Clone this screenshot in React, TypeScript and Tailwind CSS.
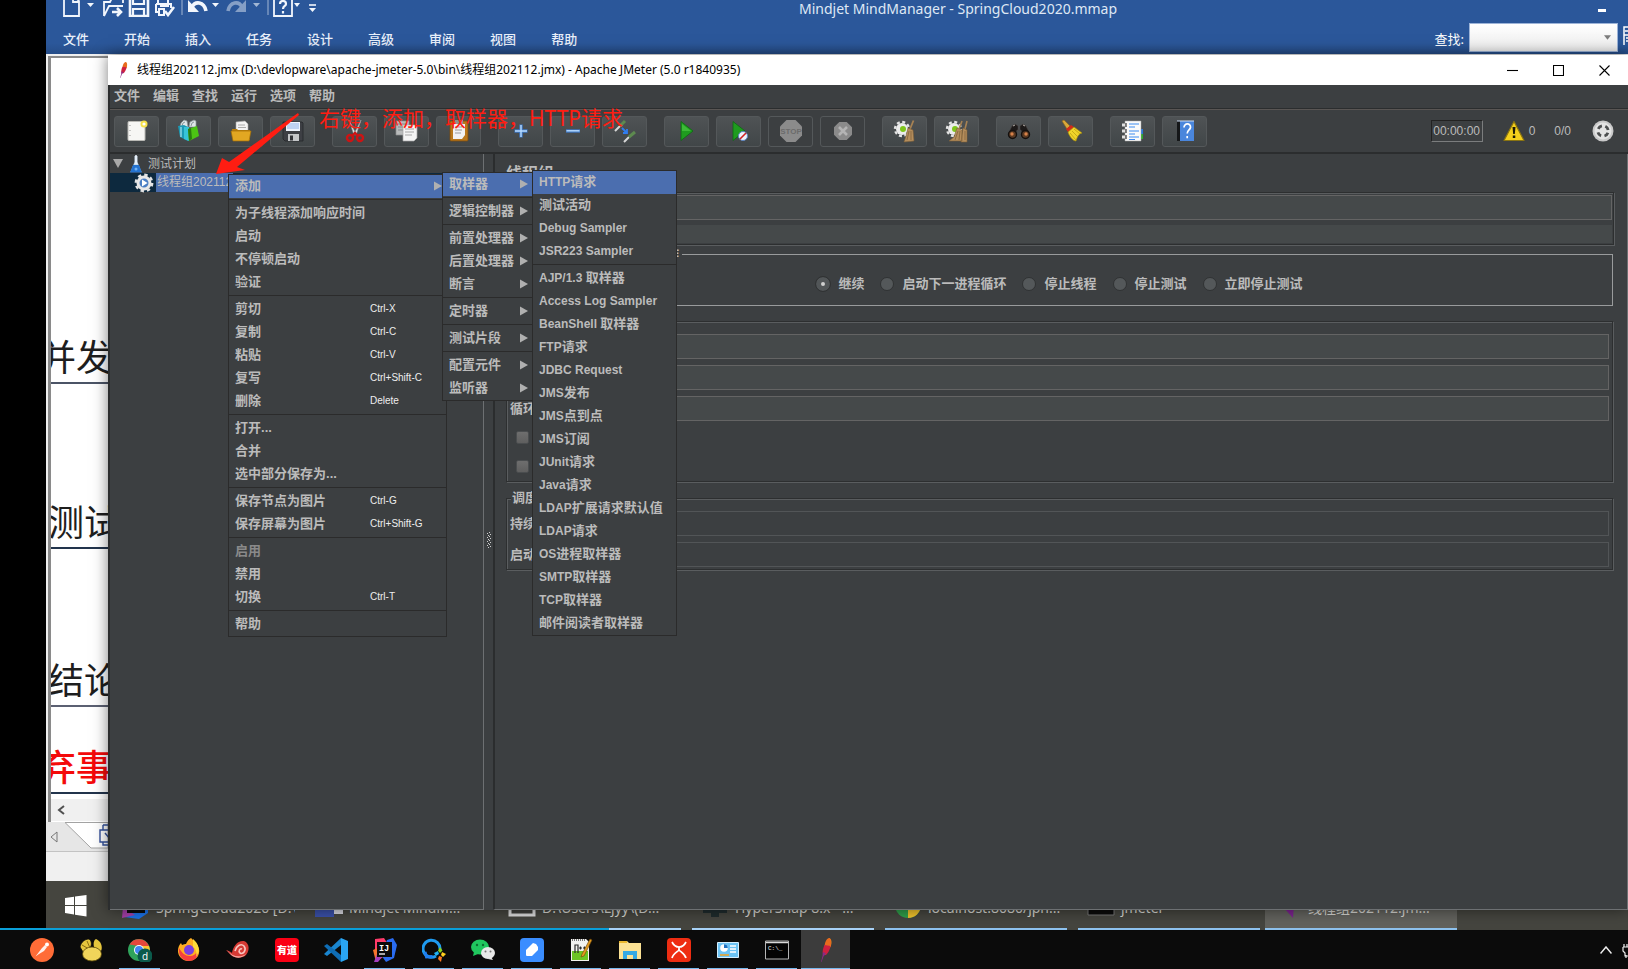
import React from "react";

type Entry = { label: string; key?: string; disabled?: boolean; active?: boolean; sub?: boolean };

const UI = "font-['Liberation_Sans','Noto_Sans_CJK_SC',sans-serif]";
const SEGOE = "font-['Noto_Sans','Noto_Sans_CJK_SC',sans-serif]";

/* ---------- toolbar icons ---------- */

const Icon = ({ children }: { children: React.ReactNode }) => (
  <svg viewBox="0 0 24 24" className="size-6 shrink-0" aria-hidden="true">
    {children}
  </svg>
);

const NewIcon = () => (
  <Icon>
    <rect x="3" y="2.500" width="17" height="19" rx="1" fill="#f6f6f4" stroke="#b9b9b5" />
    <path d="M5 6v1M5 11v1M5 16v1" stroke="#999" />
    <circle cx="19" cy="5" r="3.500" fill="#f5e04a" />
    <circle cx="19" cy="5" r="1.600" fill="#fff" />
  </Icon>
);
const TemplateIcon = () => (
  <Icon>
    <path d="M3 8 4 4l3-3 3 1 1 6zM12 8l1-5 4-2 2 1v6z" fill="#dfe6e8" stroke="#8b9799" strokeWidth=".7" />
    <path d="M5 7l1-3 2-1M14 7l1-3 2-1" fill="none" stroke="#8b9799" />
    <path d="M1 7l6-1 4 2v14l-8-4z" fill="#1c9ab5" />
    <path d="M7 8h5v14l-5-2z" fill="#36c4d8" />
    <path d="M11 10l9-3 2 10-10 5z" fill="#4cc414" />
    <path d="M11 10l1 12 3-2-1-11z" fill="#2a7d10" />
    <path d="M4 8v10" stroke="#c9f2fa" />
  </Icon>
);
const OpenIcon = () => (
  <Icon>
    <path d="M7 3l9-1 3 3v9H7z" fill="#f4f4f4" stroke="#aaa" strokeWidth=".6" />
    <path d="M9 6h7M9 8.500h8" stroke="#999" strokeWidth=".8" />
    <path d="M3 10h5l1 1h12v10H4z" fill="#b97f0c" />
    <path d="M2 12h20l-2 10H4z" fill="#e2a722" stroke="#a46f06" strokeWidth=".7" />
  </Icon>
);
const SaveIcon = () => (
  <Icon>
    <path d="M2 3h19l1 1v18H4l-2-2z" fill="#3d3f44" stroke="#24262a" strokeWidth=".8" />
    <path d="M5 3h14v9H5z" fill="#eef3fb" />
    <path d="M6 5h12M6 7h12M6 9h12" stroke="#8fb1e6" />
    <path d="M7 15h11v7H7z" fill="#c4c6c8" />
    <path d="M9 16.500h3v5H9z" fill="#303236" />
  </Icon>
);
const CutIcon = () => (
  <Icon>
    <path d="M6 1l7 14-2 1zM18 1l-7 14 2 1z" fill="#e8e8e8" stroke="#9a9a9a" strokeWidth=".6" />
    <circle cx="7" cy="19" r="3" fill="none" stroke="#cc1414" strokeWidth="2.400" />
    <circle cx="17" cy="19" r="3" fill="none" stroke="#cc1414" strokeWidth="2.400" />
    <path d="M9 17l3-3 3 3" fill="none" stroke="#cc1414" strokeWidth="2.400" />
  </Icon>
);
const CopyIcon = () => (
  <Icon>
    <path d="M1 2h13v14H1z" fill="#b9bbbb" stroke="#8c8f90" strokeWidth=".7" />
    <path d="M3 5h8M3 8h8M3 11h5" stroke="#85888a" />
    <path d="M8 6h14v13l-3 3H8z" fill="#f4f4f4" stroke="#a8a8a8" strokeWidth=".7" />
    <path d="M10 10h9M10 13h9M10 16h7" stroke="#a6a6a6" />
  </Icon>
);
const PasteIcon = () => (
  <Icon>
    <rect x="3" y="2" width="18" height="20" rx="1" fill="#b9781c" stroke="#7d4d0c" strokeWidth=".8" />
    <path d="M8 1h8v4H8z" fill="#8d9092" />
    <path d="M6 5h12v11l-3 4H6z" fill="#f2f2f2" />
    <path d="M8 8h7M8 11h7M8 14h6" stroke="#9a9a9a" />
  </Icon>
);
const PlusIcon = () => (
  <Icon>
    <path d="M12 5.500v13M5.500 12h13" stroke="#3f78c4" strokeWidth="3.400" />
    <path d="M12 6v12M6 12h12" stroke="#b9dcff" strokeWidth="1.400" />
  </Icon>
);
const MinusIcon = () => (
  <Icon>
    <path d="M5 12h14" stroke="#3f78c4" strokeWidth="3.400" />
    <path d="M5.500 11.800h13" stroke="#b9dcff" strokeWidth="1.400" />
  </Icon>
);
const ToggleIcon = () => (
  <Icon>
    <path d="M2 12l6-6" stroke="#d8d8d8" strokeWidth="2" />
    <path d="M7 7l5-5" stroke="#5d8a4f" strokeWidth="3" />
    <path d="M11 23l5-5" stroke="#d8d8d8" strokeWidth="2" />
    <path d="M16 18l6-5" stroke="#5d8a4f" strokeWidth="3" />
    <path d="M9 9l5 5m0-4v4h-4" fill="none" stroke="#2f7df0" strokeWidth="1.800" />
  </Icon>
);
const PlayShape = () => <path d="M6 2.500 18 12 6 21.500z" fill="#1f9c1f" stroke="#0d6a12" strokeWidth=".8" />;
const StartIcon = () => (
  <Icon>
    <PlayShape />
    <path d="M7 5v7h9z" fill="#52cf4a" opacity=".6" />
  </Icon>
);
const StartNoPauseIcon = () => (
  <Icon>
    <PlayShape />
    <circle cx="16" cy="17" r="4.500" fill="#eef2fb" stroke="#5b84c4" />
    <path d="M13 20l6-6" stroke="#cf2222" strokeWidth="1.600" />
  </Icon>
);
const StopIcon = () => (
  <Icon>
    <path d="M7.500 1h9L23 7.500v9L16.500 23h-9L1 16.500v-9z" fill="#8b8b8b" />
    <text x="12" y="15" textAnchor="middle" fontSize="8" fontWeight="bold" fontFamily="Liberation Sans" fill="#6c6c6c">
      STOP
    </text>
  </Icon>
);
const ShutdownIcon = () => (
  <Icon>
    <path d="M8.300 3h7.400L21 8.300v7.400L15.700 21H8.300L3 15.700V8.300z" fill="#8b8b8b" />
    <path d="M8 8l8 8M16 8l-8 8" stroke="#b4b4b4" strokeWidth="2.600" />
  </Icon>
);
const Cog = () => (
  <>
    <circle cx="9" cy="10" r="6" fill="#ececec" />
    <circle cx="9" cy="10" r="7" fill="none" stroke="#e4e4e4" strokeWidth="2.400" strokeDasharray="3 2.500" />
    <circle cx="10" cy="10" r="3" fill="#7fc51c" />
  </>
);
const ClearIcon = () => (
  <Icon>
    <Cog />
    <path d="M20.500 1.500 17 10" stroke="#a78253" strokeWidth="1.800" />
    <path d="M15 9l5 2 1 11-10 1 2-6z" fill="#b48d5c" stroke="#7d5f38" strokeWidth=".6" />
    <path d="M16 12l-2 9M18 12v9" stroke="#7d5f38" strokeWidth=".7" />
  </Icon>
);
const ClearAllIcon = () => (
  <Icon>
    <Cog />
    <path d="M17 2l-3 8M22 2l-2 8" stroke="#a78253" strokeWidth="1.600" />
    <path d="M12 9l5 2v11H4l5-4zM18 9l4 2v12h-6z" fill="#b48d5c" stroke="#7d5f38" strokeWidth=".6" />
    <path d="M13 12l-3 9M15 12l-1 9M20 12v9" stroke="#7d5f38" strokeWidth=".7" />
  </Icon>
);
const SearchIcon = () => (
  <Icon>
    <path d="M5 7l3-2 3 2v4h2V7l3-2 3 2 4 8h-8l-1-4h-4l-1 4H1z" fill="#1d1a19" stroke="#4c4744" strokeWidth=".5" />
    <circle cx="5.500" cy="15.500" r="4" fill="#5b3a22" stroke="#141110" strokeWidth="1.400" />
    <circle cx="18.500" cy="15.500" r="4" fill="#5b3a22" stroke="#141110" strokeWidth="1.400" />
    <circle cx="5" cy="15" r="1.700" fill="#d8824a" />
    <circle cx="19" cy="15" r="1.700" fill="#d8824a" />
    <path d="M6 7l2-1M16 6l2 1" stroke="#b7b0aa" />
  </Icon>
);
const BroomIcon = () => (
  <Icon>
    <path d="M3 2l2-1 6 6-3 3z" fill="#d9a83a" stroke="#8e6a16" strokeWidth=".6" />
    <path d="M7 10l5-4 3 2-6 5z" fill="#d22a1a" />
    <path d="M9 13l6-5 8 6c-4 1-5 5-6 8-3 0-7-5-8-9z" fill="#f0d52a" stroke="#a88d0c" strokeWidth=".7" />
    <path d="M11 14l6 7M13 12l6 6M15 10l6 5" stroke="#b7990f" strokeWidth=".7" />
  </Icon>
);
const ListIcon = () => (
  <Icon>
    <path d="M20 10h2v5h-2z" fill="#2a76d8" />
    <path d="M20 15h2v5h-2z" fill="#2ea72c" />
    <path d="M4 2h16v20H4z" fill="#fafafa" stroke="#aaa" strokeWidth=".5" />
    <path d="M8 5h10M8 12h10M8 18h10" stroke="#3d8bf0" strokeWidth="1.200" />
    <path d="M8 8h6M8 15h6M8 20.500h6" stroke="#3d8bf0" strokeWidth="1.200" />
    <path d="M1 6h4M1 12h4M1 18h4" stroke="#e0e0e0" strokeWidth="3" />
    <path d="M5 4v4M5 10v4M5 16v4" stroke="#333" strokeWidth="1.200" />
  </Icon>
);
const HelpIcon = () => (
  <Icon>
    <path d="M4 2h4v20H4z" fill="#151719" />
    <path d="M7 2h14v20H7z" fill="#4a86dc" />
    <path d="M4 2h17" stroke="#ccdcf4" />
    <path d="M11 8.500c0-5 7-4.500 6.500 0-.4 2.500-3.300 2.500-3.300 6M14.200 17v2.200" fill="none" stroke="#fff" strokeWidth="1.700" />
  </Icon>
);

const TOOL_GROUPS: { name: string; icon: React.ReactNode; off?: boolean }[][] = [
  [
    { name: "新建", icon: <NewIcon /> },
    { name: "模板", icon: <TemplateIcon /> },
    { name: "打开", icon: <OpenIcon /> },
    { name: "保存", icon: <SaveIcon /> },
  ],
  [
    { name: "剪切", icon: <CutIcon /> },
    { name: "复制", icon: <CopyIcon /> },
    { name: "粘贴", icon: <PasteIcon /> },
  ],
  [
    { name: "展开", icon: <PlusIcon /> },
    { name: "折叠", icon: <MinusIcon /> },
    { name: "切换", icon: <ToggleIcon /> },
  ],
  [
    { name: "启动", icon: <StartIcon /> },
    { name: "不停顿启动", icon: <StartNoPauseIcon /> },
    { name: "停止", icon: <StopIcon />, off: true },
    { name: "关闭", icon: <ShutdownIcon />, off: true },
  ],
  [
    { name: "清除", icon: <ClearIcon /> },
    { name: "清除全部", icon: <ClearAllIcon /> },
  ],
  [
    { name: "查找", icon: <SearchIcon /> },
    { name: "重置查找", icon: <BroomIcon /> },
  ],
  [
    { name: "函数助手", icon: <ListIcon /> },
    { name: "帮助", icon: <HelpIcon /> },
  ],
];

/* ---------- popup menus ---------- */

/* Latin runs are set one pixel smaller than the Chinese glyphs beside them. */
const Mixed = ({ text }: { text: string }) => (
  <>
    {text.split(/([\x20-\x7e]+)/).map((run, i) =>
      /^[\x20-\x7e]+$/.test(run) && run !== "..." ? (
        <span key={i} className="whitespace-pre text-[12px]">{run}</span>
      ) : (
        run
      )
    )}
  </>
);

const Popup = ({ groups, place }: { groups: Entry[][]; place: string }) => (
  <div role="menu" className={`absolute border border-[#2b2b2b] bg-[#3c3f41] ${place}`}>
    {groups.map((group, g) => (
      <div key={g} role="group" className={g ? "mt-px border-t border-[#2b2b2b] pt-[2px]" : ""}>
        {group.map((item) => (
          <button
            key={item.label}
            type="button"
            role="menuitem"
            disabled={item.disabled}
            className={`flex h-[23px] w-full items-center pr-1 pb-[2px] pl-[6px] text-left text-[13px] leading-[18px] font-bold whitespace-nowrap ${
              item.active ? "bg-[#4b6eaf]" : ""
            } ${item.disabled ? "text-[#8a8a8a]" : "text-[#bbbbbb]"}`}
          >
            <span className="flex-1">
              <Mixed text={item.label} />
            </span>
            {item.key && <kbd className={`w-[72px] text-[10px] font-normal text-[#eeeeee] ${UI}`}>{item.key}</kbd>}
            {item.sub && (
              <svg viewBox="0 0 8 10" className="h-[10px] w-2" aria-hidden="true">
                <path d="M0 0.500 8 5 0 9.500z" fill="#b0b0b0" />
              </svg>
            )}
          </button>
        ))}
      </div>
    ))}
  </div>
);

const NODE_MENU: Entry[][] = [
  [{ label: "添加", sub: true, active: true }],
  [{ label: "为子线程添加响应时间" }, { label: "启动" }, { label: "不停顿启动" }, { label: "验证" }],
  [
    { label: "剪切", key: "Ctrl-X" },
    { label: "复制", key: "Ctrl-C" },
    { label: "粘贴", key: "Ctrl-V" },
    { label: "复写", key: "Ctrl+Shift-C" },
    { label: "删除", key: "Delete" },
  ],
  [{ label: "打开..." }, { label: "合并" }, { label: "选中部分保存为..." }],
  [
    { label: "保存节点为图片", key: "Ctrl-G" },
    { label: "保存屏幕为图片", key: "Ctrl+Shift-G" },
  ],
  [{ label: "启用", disabled: true }, { label: "禁用" }, { label: "切换", key: "Ctrl-T" }],
  [{ label: "帮助" }],
];

const ADD_MENU: Entry[][] = [
  [{ label: "取样器", sub: true, active: true }],
  [{ label: "逻辑控制器", sub: true }],
  [
    { label: "前置处理器", sub: true },
    { label: "后置处理器", sub: true },
    { label: "断言", sub: true },
  ],
  [{ label: "定时器", sub: true }],
  [{ label: "测试片段", sub: true }],
  [
    { label: "配置元件", sub: true },
    { label: "监听器", sub: true },
  ],
];

const SAMPLER_MENU: Entry[][] = [
  [{ label: "HTTP请求", active: true }, { label: "测试活动" }, { label: "Debug Sampler" }, { label: "JSR223 Sampler" }],
  [
    { label: "AJP/1.3 取样器" },
    { label: "Access Log Sampler" },
    { label: "BeanShell 取样器" },
    { label: "FTP请求" },
    { label: "JDBC Request" },
    { label: "JMS发布" },
    { label: "JMS点到点" },
    { label: "JMS订阅" },
    { label: "JUnit请求" },
    { label: "Java请求" },
    { label: "LDAP扩展请求默认值" },
    { label: "LDAP请求" },
    { label: "OS进程取样器" },
    { label: "SMTP取样器" },
    { label: "TCP取样器" },
    { label: "邮件阅读者取样器" },
  ],
];

/* ---------- feather, used in several places ---------- */

const Feather = ({ className }: { className: string }) => (
  <svg viewBox="0 0 12 24" className={className} aria-hidden="true">
    <path d="M9 0c3 1 3 5 1.500 9L6 8z" fill="#f08a1d" />
    <path d="M9 0C6 1 5 4 4.500 8L10 10c1-3 1.500-5 .5-9z" fill="#e86a1e" />
    <path d="M4.500 7 10.500 8C10 12 8 15 6 17H3c-1-3 0-7 1.500-10z" fill="#cf2040" />
    <path d="M3 14l3 1.500-2.500 3L1.500 24H1l1.500-6z" fill="#8a2a86" />
  </svg>
);

/* ---------- MindManager, behind the JMeter window ---------- */

const Caret = ({ className = "" }: { className?: string }) => (
  <svg viewBox="0 0 8 5" className={`h-[5px] w-[7px] ${className}`} aria-hidden="true">
    <path d="M0 0h8L4 5z" fill="currentColor" />
  </svg>
);

const TOPICS = [
  { text: "并发", box: "h-[326px] border-[#4b5466]", shift: "-ml-[11px] text-[#1e1e1e]" },
  { text: "测试", box: "h-[165px] border-[#22344c]", shift: "-ml-[3px] text-[#1e1e1e]" },
  { text: "结论", box: "h-[158px] border-[#5b6072]", shift: "-ml-[3px] text-[#1e1e1e]" },
  { text: "弃事", box: "h-[87px] border-[#22344c]", shift: "-ml-[11px] font-medium text-[#f40a0a]" },
];

const REMOTE_TASKS: { text: string; icon: React.ReactNode; line: string }[] = [
  {
    text: "SpringCloud2020 [D:\\...",
    line: "w-[182px] mr-[11px] border-[#12a0d6]",
    icon: (
      <>
        <path d="M2 2h24v20l-9 6-15-2z" fill="#1b72e8" />
        <path d="M2 4h5v16l6 4-13 3z" fill="#a53fa8" />
        <path d="M5 4h18v18H5z" fill="#0a0a0a" />
        <path d="M9 18h6" stroke="#fff" strokeWidth="2" />
      </>
    ),
  },
  {
    text: "Mindjet MindM...",
    line: "w-[182px] mr-[11px] border-[#12a0d6]",
    icon: (
      <>
        <path d="M0 4h19v22H0z" fill="#3a50a8" />
        <path d="M19 8h9v15h-9z" fill="#d8d8e0" />
      </>
    ),
  },
  {
    text: "D:\\Users\\Ljyy\\(D...",
    line: "w-[182px] mr-[11px] border-[#a9d3f7]",
    icon: <path d="M2 4h24v20H2z" fill="#3f3f3b" stroke="#dcdcdc" strokeWidth="3" />,
  },
  {
    text: "HyperSnap 8.x - ...",
    line: "w-[182px] mr-[11px] border-[#a9d3f7]",
    icon: <path d="M2 4h24v18H2zM10 20h8v6h-8z" fill="#1f2b2d" />,
  },
  {
    text: "localhost:8080/jpn...",
    line: "w-[182px] mr-[11px] border-[#8ec2ee]",
    icon: (
      <>
        <circle cx="14" cy="14" r="13" fill="#2f9e4a" />
        <path d="M14 14h13a13 13 0 0 1-13 13z" fill="#f0c22c" />
      </>
    ),
  },
  {
    text: "jmeter",
    line: "w-[182px] mr-[5px] border-[#8ec2ee]",
    icon: <path d="M1 4h26v20H1z" fill="#0a0a0a" stroke="#777" />,
  },
  {
    text: "线程组202112.jm...",
    line: "w-[192px] border-[#8ec2ee] bg-[#62625d]",
    icon: <path d="M12 2l8 12-1 13-9-10z" fill="#7d2390" />,
  },
];

const MindManager = () => (
  <div className="flex h-full flex-col bg-[#f0f0f0]">
    <header className={`flex h-[54px] shrink-0 flex-col bg-linear-to-b from-[#2b579a] from-80% to-[#264d88] text-white ${SEGOE}`}>
      <div className="flex h-[18px] items-end overflow-hidden pb-px pl-[17px]">
        <svg viewBox="0 0 260 22" className="h-[22px] w-[260px] shrink-0" fill="none" stroke="#f2f6fc" strokeWidth="1.800" aria-hidden="true">
          <path d="M1 1h10l5 5v15H1zM10 1v6h6" />
          <path d="M41 21V7h6l2-4h11v5M41 21l5-10h14" />
          <path d="M49 17h9m-4-4 4 4-4 4" strokeWidth="2.600" />
          <path d="M67 2h15l3 3v16H67z" strokeWidth="2.600" />
          <path d="M70 3v6h11V3M70 20v-6h11v6" strokeWidth="2.200" />
          <path d="M95 9V3h10v6M93 9h15v4M93 9v8h3M96 14h5v6h-5zM97 11h9" strokeWidth="2" />
          <path d="M102 16l3 4 6-8" strokeWidth="2.600" />
          <path d="M119 0v20M205 0v20" strokeWidth="1" opacity=".6" />
          <path d="M129 12c3-6 12-6 14 4" strokeWidth="3.600" />
          <path d="M125 5v12h11z" fill="#f2f6fc" stroke="none" />
          <g opacity=".45">
            <path d="M179 12c-3-6-12-6-14 4" strokeWidth="3.600" />
            <path d="M183 5v12h-11z" fill="#f2f6fc" stroke="none" />
          </g>
          <path d="M211 1h18v20h-18z" />
          <path d="M217 9c0-4 6-4 6 0 0 2-3 2-3 5m0 2v2.500" strokeWidth="2.200" />
          <path d="M24 8h7l-3.500 4zM149 8h7l-3.500 4zM231 8h6l-3 4zM246 13h7l-3.500 4z" fill="#f2f6fc" stroke="none" />
          <path d="M190 8h7l-3.500 4z" fill="#f2f6fc" stroke="none" opacity=".6" />
          <path d="M246 10h7" strokeWidth="1.600" />
        </svg>
        <h1 className="ml-[476px] flex-1 self-center text-[14px] leading-[16px] whitespace-nowrap text-[#dfe8f5]">
          Mindjet MindManager - SpringCloud2020.mmap
        </h1>
        <button type="button" aria-label="最小化" className="mr-[22px] mb-[5px] h-[3px] w-2 bg-white" />
      </div>
      <div className="flex h-9 items-center pl-[17px]">
        <nav className="flex flex-1 gap-[35px] pt-[5px] text-[13px] leading-[18px] font-medium text-[#e9f0fa]">
          {["文件", "开始", "插入", "任务", "设计", "高级", "审阅", "视图", "帮助"].map((t) => (
            <a key={t} href="#">{t}</a>
          ))}
        </nav>
        <label htmlFor="mm-find" className="mr-[5px] pt-[5px] text-[13px] leading-[18px]">查找:</label>
        <div className="mt-[2px] flex h-[29px] w-[149px] items-center border border-[#9db4d8] bg-linear-to-b from-white to-[#ececec] pr-[6px]">
          <input id="mm-find" className="min-w-0 flex-1 bg-transparent outline-none" />
          <Caret className="text-[#7d7d7d]" />
        </div>
        <svg viewBox="0 0 6 20" className="ml-1 h-5 w-[6px]" fill="none" stroke="#fff" strokeWidth="1.500" aria-hidden="true">
          <path d="M6 1H2v8h4M3 5h3M2 9v10M4 12h2M4 15h2" />
        </svg>
      </div>
    </header>
    <div className="mt-[2px] ml-[2px] flex-1 overflow-hidden border-t-2 border-l-[3px] border-[#8a8a8a] bg-white">
      {TOPICS.map((t) => (
        <div key={t.text} className={`flex items-end border-b-2 pb-[9px] ${t.box}`}>
          <p className={`text-[36px] leading-[36px] whitespace-nowrap font-['Noto_Sans_CJK_SC',sans-serif] ${t.shift}`}>{t.text}</p>
        </div>
      ))}
      <div className="mt-[5px] flex h-[22px] items-center bg-[#f0f0f0] pl-[6px]">
        <svg viewBox="0 0 8 10" className="h-[10px] w-2" aria-hidden="true">
          <path d="M7 1 2 5l5 4" fill="none" stroke="#505050" strokeWidth="2" />
        </svg>
      </div>
    </div>
    <svg viewBox="0 0 62 30" className="h-[30px] w-[62px] shrink-0" aria-hidden="true">
      <path d="M0 0h62v30H0z" fill="#e6e6e6" />
      <path d="M19 .5 45 26h17V.5z" fill="#fff" stroke="#a3a3a3" />
      <path d="M11 10 5 15l6 5z" fill="none" stroke="#777" />
      <path d="M57 8h7v-5M57 3h7M54 8h10v12H54zM57 20v3h7M57 3v5M59 11l5 6" fill="none" stroke="#33509b" strokeWidth="1.400" />
      <path d="M0 29.500h62" stroke="#c3c3c3" />
    </svg>
    <div className="h-[29px] shrink-0 bg-[#f0f0f0]" />
    <div className={`flex h-[49px] shrink-0 bg-[#45453f] text-[#d5d5d0] ${SEGOE}`}>
      <button type="button" aria-label="开始菜单" className="flex w-[67px] shrink-0 items-center pl-[19px]">
        <svg viewBox="0 0 22 22" className="size-[22px]" fill="#fff" aria-hidden="true">
          <path d="M0 3l9-1.200V10H0zM10 1.600 21.500 0v10H10zM0 11h9v8.500L0 18zM10 11h11.500v10.500L10 19.800z" />
        </svg>
      </button>
      {REMOTE_TASKS.map((t) => (
        <button
          key={t.text}
          type="button"
          className={`flex h-full shrink-0 items-center gap-[6px] overflow-hidden border-b-2 pl-[9px] text-[14px] whitespace-nowrap ${t.line}`}
        >
          <svg viewBox="0 0 28 28" className="size-7 shrink-0" aria-hidden="true">{t.icon}</svg>
          <span className="pt-[5px]">{t.text}</span>
        </button>
      ))}
    </div>
  </div>
);

/* ---------- JMeter ---------- */

const FIELD = "h-[25px] w-full min-w-0 border border-[#646464] bg-[#45494a] px-1 text-[13px] text-[#bbbbbb] outline-none";
const OFF_FIELD = "h-[25px] w-full min-w-0 border border-[#525557] bg-[#3c3f41] px-1 text-[13px] outline-none";
const ETCHED = "border border-[#2d2f30] shadow-[1px_1px_0_#5a5d5f,inset_1px_1px_0_#5a5d5f]";

const ThreadGroup = () => (
  <main className="flex min-w-0 flex-1 flex-col border-r border-b border-l-2 border-[#6d7072] border-l-[#2b2d2e] pt-[10px] pr-[14px] pl-[11px] text-[13px] leading-[18px] font-bold text-[#bbbbbb]">
    <h2 className="text-[16px] leading-5">线程组</h2>
    <div className={`mt-2 -mr-px flex flex-col gap-[5px] px-px pt-[2px] pb-px ${ETCHED}`}>
      <input aria-label="名称" className={FIELD} />
      <input aria-label="注释" className="h-[18px] w-full bg-[#45494a] px-1 outline-none" />
    </div>
    <fieldset className="mt-[2px] h-[59px] min-w-0 border border-[#999b9c]">
      <legend className="ml-[3px] h-[14px] pr-[3px] leading-[14px]">在取样器错误后要执行的动作</legend>
      <div className="flex justify-center gap-[16px] pt-[14px]">
        {["继续", "启动下一进程循环", "停止线程", "停止测试", "立即停止测试"].map((t, i) => (
          <label key={t} className="flex items-center gap-2 whitespace-nowrap">
            <input
              type="radio"
              name="on-error"
              defaultChecked={i === 0}
              className="size-[14px] appearance-none rounded-full border border-[#303233] bg-[#54585a] checked:border-[5px] checked:border-[#525658] checked:bg-[#d0d0d0] checked:outline checked:outline-[#303233]"
            />
            {t}
          </label>
        ))}
      </div>
    </fieldset>
    <section className={`mt-[15px] flex h-[161px] flex-col gap-[6px] px-[3px] pt-3 ${ETCHED}`}>
      <input aria-label="线程数" className={FIELD} />
      <input aria-label="Ramp-Up Period (in seconds)" className={FIELD} />
      <div className="flex items-center">
        <label htmlFor="loops" className="w-[120px] shrink-0">循环次数</label>
        <input id="loops" className={FIELD} />
      </div>
      <div className="flex flex-col gap-4 pt-1 pl-[6px]">
        {["延迟创建线程直到需要", "调度器"].map((t) => (
          <input
            key={t}
            type="checkbox"
            aria-label={t}
            className="size-[13px] appearance-none rounded-[2px] border border-[#4a4d4f] bg-linear-to-b from-[#6e6e6e] to-[#5f5f5f]"
          />
        ))}
      </div>
    </section>
    <fieldset className={`mt-[9px] min-w-0 px-[3px] pb-[2px] ${ETCHED}`}>
      <legend className="ml-px h-[14px] bg-[#3c3f41] px-px leading-[14px]">调度器配置</legend>
      <div className="flex flex-col gap-[6px] pt-[6px]">
        {[
          ["duration", "持续时间（秒）"],
          ["delay", "启动延迟（秒）"],
        ].map(([id, t]) => (
          <div key={id} className="flex items-center">
            <label htmlFor={id} className="w-[120px] shrink-0">{t}</label>
            <input id={id} disabled className={OFF_FIELD} />
          </div>
        ))}
      </div>
    </fieldset>
  </main>
);

const Tree = () => (
  <aside className="w-[374px] shrink-0 border-r border-b border-[#6d7072] text-[12px] text-[#bbbbbb]">
    <div className="flex h-[19px] items-center pl-[3px]">
      <svg viewBox="0 0 10 9" className="h-[9px] w-[10px]" aria-hidden="true">
        <path d="M0 0h10L5 9z" fill="#a9a9a9" />
      </svg>
      <svg viewBox="0 0 12 18" className="ml-[7px] h-[18px] w-3" aria-hidden="true">
        <path d="M4.500 1h3v6l4 10H.5l4-10z" fill="#c9dcec" />
        <path d="M3 10h6l3 7.500H0z" fill="#2372cf" />
        <path d="M6 0v9" stroke="#eef6ff" strokeWidth="1.500" />
        <circle cx="6" cy="14" r="1.500" fill="#6fb2f5" />
      </svg>
      <span className="ml-[6px]">测试计划</span>
    </div>
    <div className="flex h-[19px] items-center bg-[#0d293e] pl-[24px]">
      <svg viewBox="0 0 20 20" className="size-5" aria-hidden="true">
        <circle cx="10" cy="10" r="6" fill="#4a7ec4" stroke="#e8e8e8" strokeWidth="3" />
        <circle cx="10" cy="10" r="8.200" fill="none" stroke="#e4e4e4" strokeWidth="2.400" strokeDasharray="3.400 3.040" />
        <path d="M8 6.500 13.500 10 8 13.500z" fill="#fff" />
      </svg>
      <span className="ml-[2px] h-[19px] bg-[#4b6eaf] px-px leading-[19px]">线程组202112</span>
    </div>
  </aside>
);

const JMeter = () => (
  <div className="flex h-full flex-col bg-[#3c3f41] shadow-[0_0_14px_rgba(0,0,0,0.5)]">
    <header className={`flex h-[30px] shrink-0 items-center bg-white pl-[11px] text-[12px] text-black ${SEGOE}`}>
      <Feather className="h-4 w-[9px]" />
      <h1 className="ml-[9px] flex-1 whitespace-nowrap">
        线程组202112.jmx (D:\devlopware\apache-jmeter-5.0\bin\线程组202112.jmx) - Apache JMeter (5.0 r1840935)
      </h1>
      <div className="flex gap-[35px] pr-[18px]">
        {[
          ["最小化", "M0 5.500h11"],
          ["最大化", "M.5.5h10v10H.5z"],
          ["关闭", "M.5.5l10 10M10.500.5l-10 10"],
        ].map(([name, d]) => (
          <button key={name} type="button" aria-label={name}>
            <svg viewBox="0 0 11 11" className="size-[11px]" aria-hidden="true">
              <path d={d} fill="none" stroke="#000" strokeWidth="1.100" />
            </svg>
          </button>
        ))}
      </div>
    </header>
    <div className="flex min-h-0 flex-1 flex-col border-l-2 border-[#2b2d2e]">
      <nav className="flex h-6 shrink-0 items-center gap-[13px] border-b border-[#2b2d2e] pb-px pl-1 text-[13px] leading-[18px] font-bold text-[#bbbbbb]">
        {["文件", "编辑", "查找", "运行", "选项", "帮助"].map((t) => (
          <a key={t} href="#">{t}</a>
        ))}
      </nav>
      <div className="flex h-[45px] shrink-0 items-center border-t border-b-2 border-t-[#5a5654] border-b-[#2b2d2e] pl-1">
        <div className="flex flex-1 gap-[17px]">
          {TOOL_GROUPS.map((group, g) => (
            <div key={g} className="flex gap-[7px]">
              {group.map((t) => (
                <button
                  key={t.name}
                  type="button"
                  aria-label={t.name}
                  disabled={t.off}
                  className={`flex h-[31px] w-[45px] items-center justify-center rounded-[3px] border border-[#54585a] ${
                    t.off ? "" : "bg-linear-to-b from-[#4f5355] to-[#414648]"
                  }`}
                >
                  {t.icon}
                </button>
              ))}
            </div>
          ))}
        </div>
        <div className="flex items-center pr-[14px] text-[12px] text-[#bbbbbb]">
          <output className="h-[22px] w-[52px] border border-t-[#222] border-r-[#7b7d7e] border-b-[#7b7d7e] border-l-[#222] text-center leading-5">00:00:00</output>
          <svg viewBox="0 0 22 22" className="ml-[20px] size-[22px]" aria-hidden="true">
            <path d="M11 1.500 21 20.500H1z" fill="#f5cf1c" stroke="#8a7411" strokeWidth="1.200" strokeLinejoin="round" />
            <path d="M9.500 7h3l-.7 7h-1.600zM9.800 15.500h2.500V18H9.800z" fill="#1e1a06" />
          </svg>
          <span className="ml-1">0</span>
          <span className="ml-[19px]">0/0</span>
          <svg viewBox="0 0 22 22" className="ml-[21px] size-[22px]" aria-hidden="true">
            <circle cx="11" cy="11" r="10.500" fill="#c9c9c9" />
            <circle cx="11" cy="11" r="8.500" fill="#e4e4e4" />
            <circle cx="11" cy="11" r="5.200" fill="none" stroke="#4d4f50" strokeWidth="2.800" strokeDasharray="4.600 3.568" strokeDashoffset="-1.800" />
          </svg>
        </div>
      </div>
      <div className="flex min-h-0 flex-1">
        <Tree />
        <div className="flex w-[9px] shrink-0 items-center justify-center pt-4">
          <svg viewBox="0 0 4 16" className="h-4 w-1" fill="#d0d0d0" aria-hidden="true">
            {[0, 4, 8, 12].map((y) => (
              <path key={y} d={`M2 ${y}h1v1H2zM0 ${y + 1}h1v1H0zM3 ${y + 2}h1v1H3zM1 ${y + 3}h1v1H1z`} />
            ))}
          </svg>
        </div>
        <ThreadGroup />
      </div>
    </div>
  </div>
);

/* ---------- local task bar ---------- */

const DOCK: { name: string; run?: boolean; active?: boolean; icon: React.ReactNode }[] = [
  {
    name: "Postman",
    icon: (
      <>
        <circle cx="12" cy="12" r="12" fill="#ff6c37" />
        <path d="M5.500 18.500 12 10l3-3 2 2-3 4-5 3z" fill="#fff" opacity=".9" />
        <circle cx="17" cy="6.500" r="2" fill="#fff" />
      </>
    ),
  },
  {
    name: "Navicat",
    icon: (
      <>
        <path d="M1 9c1-5 5-8 9-8 3 2 3 6 1 9l-7 4z" fill="#e6c63d" stroke="#0b0b0b" strokeWidth=".8" />
        <path d="M11 10 8 3M10 11 3 7" stroke="#8a6d10" />
        <path d="M15 9c-1-4 0-7 2-8 5 2 7 8 5 12z" fill="#e6c63d" />
        <ellipse cx="13" cy="16" rx="9.500" ry="7" fill="#f0d45a" stroke="#5a4708" strokeWidth=".8" />
      </>
    ),
  },
  {
    name: "Chrome",
    run: true,
    icon: (
      <>
        <circle cx="11" cy="12" r="11" fill="#2fa35b" />
        <path d="M1.500 6.500A11 11 0 0 1 21 8H11z" fill="#e6473b" />
        <path d="M21 8a11 11 0 0 1-9 15l3-9-3-6z" fill="#fbc52f" />
        <circle cx="11" cy="12" r="5" fill="#fff" />
        <circle cx="11" cy="12" r="4" fill="#4285f4" />
        <circle cx="17" cy="18" r="7.500" fill="#0b5a4b" />
        <text x="17" y="21.500" textAnchor="middle" fontSize="10" fontFamily="Open Sans" fill="#fff">d</text>
      </>
    ),
  },
  {
    name: "Firefox",
    icon: (
      <>
        <path d="M14 0c2 2 3 3 4 5 5 4 5 9 3 13-3 5-12 7-17 2C-1 15 1 8 4 5l1 2c2-1 3-1 4-1 1-3 3-5 5-6z" fill="#ffae22" />
        <path d="M2 10c-1 8 4 13 10 13 6 0 10-5 9-10-2 3-5 5-8 5-5 0-8-3-11-8z" fill="#f6403f" />
        <circle cx="12" cy="12" r="5" fill="#7a3fe0" />
        <path d="M16 1c6 5 8 12 3 18 1-4 0-8-3-10z" fill="#ffdc3a" />
      </>
    ),
  },
  {
    name: "Snail",
    icon: (
      <>
        <path d="M0 12c3 1 5 2 6 3 1-7 6-13 12-12 6 2 6 11 1 15-5 3-11 2-14-1z" fill="#d63a34" />
        <path d="M9 13c1-5 6-8 9-5 3 4-1 9-4 7-2-2 0-5 2-4" fill="none" stroke="#f7c5bf" strokeWidth="1.600" />
        <path d="M1 12c5 7 13 8 19 4-3 4-12 7-19-4z" fill="#f4aaa2" />
      </>
    ),
  },
  {
    name: "有道",
    icon: (
      <>
        <rect width="24" height="24" rx="4" fill="#fb0014" />
        <text x="12" y="15.500" textAnchor="middle" fontSize="10" fontWeight="900" fontFamily="Noto Sans CJK SC" fill="#fff">有道</text>
      </>
    ),
  },
  {
    name: "VS Code",
    icon: (
      <>
        <path d="M17 0l7 3v18l-7 3V0z" fill="#2aa5f2" />
        <path d="M17 0v7L3 18l-3-2L17 0z" fill="#1a86d0" />
        <path d="M17 24v-7L3 6 0 8l17 16z" fill="#0f6db5" />
      </>
    ),
  },
  {
    name: "IntelliJ IDEA",
    run: true,
    icon: (
      <>
        <path d="M2 1l9-1 5 8-9 7-5-2z" fill="#fe3b6a" />
        <path d="M14 2l6-2 4 7-3 13-8 4-5-7z" fill="#2a6cf0" />
        <path d="M0 12l7-3 3 10-7 5z" fill="#f7752f" />
        <path d="M4 16l6 2-5 6H1z" fill="#a53fc0" />
        <path d="M4 4h15v15H4z" fill="#0a0a0a" />
        <text x="6" y="12.500" fontSize="8.500" fontWeight="bold" fontFamily="Liberation Mono" fill="#fff">IJ</text>
        <path d="M6 16h6" stroke="#fff" strokeWidth="1.300" />
      </>
    ),
  },
  {
    name: "QQ 浏览器",
    run: true,
    icon: (
      <>
        <path d="M14 18A8.500 8.500 0 1 1 18 11.500" fill="none" stroke="#1f9bf0" strokeWidth="3" />
        <path d="M3 14l1.500 5 6-.5" fill="none" stroke="#1f7ff0" strokeWidth="3" />
        <path d="M18 9l2.500 3.500L18 15l-2-2.500z" fill="#8bd31c" />
        <path d="M12 15l4-2 1 3-3 2z" fill="#22b3f4" />
        <path d="M20 14l4 2-3 3-2-2z" fill="#ffd01f" />
        <path d="M17 18l3 1-1 5-3-3z" fill="#ff7b1f" />
      </>
    ),
  },
  {
    name: "微信",
    run: true,
    icon: (
      <>
        <ellipse cx="9" cy="9" rx="9" ry="7.500" fill="#20c75e" />
        <path d="M3 14l-1 4 5-2z" fill="#20c75e" />
        <circle cx="6" cy="7" r="1.200" fill="#0d6f32" />
        <circle cx="12" cy="7" r="1.200" fill="#0d6f32" />
        <ellipse cx="17" cy="15" rx="7" ry="6" fill="#e9e9e9" />
        <path d="M20 19l2 3-5-1z" fill="#e9e9e9" />
        <circle cx="14.500" cy="13.500" r="1" fill="#777" />
        <circle cx="19.500" cy="13.500" r="1" fill="#777" />
      </>
    ),
  },
  {
    name: "便签",
    run: true,
    icon: (
      <>
        <rect width="24" height="24" rx="4" fill="#3a8dff" />
        <path d="M6 12l7-7 3 1 2 3v3l-6 6H7c-1 0-1-1-1-2z" fill="#fff" />
      </>
    ),
  },
  {
    name: "Notepad++",
    run: true,
    icon: (
      <>
        <path d="M2 1h15l3 3v19H2z" fill="#f2f2f0" />
        <path d="M3 13h16v9H3z" fill="#6cc424" />
        <path d="M3 2h14" stroke="#777" strokeDasharray="1 1" strokeWidth="2" />
        <path d="M6 15V7h3v8M10 10h3M14 10h3M11.500 8.500v3M15.500 8.500v3" stroke="#2a2a2a" strokeWidth="1.200" fill="none" />
        <path d="M21 1l2 1-8 16-3 1 1-3z" fill="#e39a1f" stroke="#6b4508" strokeWidth=".6" />
      </>
    ),
  },
  {
    name: "文件资源管理器",
    run: true,
    icon: (
      <>
        <path d="M1 3h8l2 2h12v16H1z" fill="#fbe194" />
        <path d="M1 3h8v2H1z" fill="#eab72e" />
        <path d="M5 21v-8h14v8h-4v-4H9v4z" fill="#35a9e4" />
      </>
    ),
  },
  {
    name: "XMind",
    run: true,
    icon: (
      <>
        <rect width="24" height="24" rx="4" fill="#ee2d12" />
        <path d="M5 4c2 4 5 5 7 5s5-1 7-5M5 20c1-4 5-6 7-8 2 2 6 4 7 8" fill="none" stroke="#fff" strokeWidth="1.700" />
        <path d="M12 9v3" stroke="#fff" strokeWidth="1.700" />
      </>
    ),
  },
  {
    name: "控制面板",
    run: true,
    icon: (
      <>
        <path d="M1.500 4.500h21v15h-21z" fill="#6cc3f4" stroke="#d5efff" />
        <circle cx="8" cy="10" r="3.800" fill="#fff" />
        <path d="M8 10V6.200A3.800 3.800 0 0 1 11.800 10z" fill="#1d72c4" />
        <path d="M14 8h6M14 11h6M14 14h6" stroke="#fff" strokeWidth="1.400" />
        <path d="M4 17h9" stroke="#f2a01f" strokeWidth="1.500" />
      </>
    ),
  },
  {
    name: "命令提示符",
    run: true,
    icon: (
      <>
        <path d="M.5 3h23v18H.5z" fill="#030303" stroke="#b5b5b5" />
        <path d="M1 4.500h22" stroke="#d9d9d9" strokeWidth="1.500" />
        <text x="3" y="12" fontSize="6" fontFamily="Liberation Mono" fill="#eee">C:\_</text>
      </>
    ),
  },
  { name: "JMeter", run: true, active: true, icon: null },
];

const Dock = () => (
  <footer className="flex h-[39px] shrink-0 items-stretch bg-[#0b0b0b] pl-[17px]">
    {DOCK.map((d) => (
      <button
        key={d.name}
        type="button"
        aria-label={d.name}
        className={`relative flex w-[49px] shrink-0 items-center justify-center ${d.active ? "bg-[#3c3c3c]" : ""}`}
      >
        {d.icon ? <svg viewBox="0 0 24 24" className="size-6" aria-hidden="true">{d.icon}</svg> : <Feather className="h-6 w-3" />}
        {d.run && <span className={`absolute bottom-0 h-px bg-[#76b9ed] ${d.active ? "inset-x-0" : "inset-x-1"}`} />}
      </button>
    ))}
    <div className="ml-auto flex items-center gap-[10px] overflow-hidden">
      <svg viewBox="0 0 12 8" className="h-2 w-3" fill="none" stroke="#eee" strokeWidth="1.500" aria-hidden="true">
        <path d="M.5 7.500 6 1l5.500 6.500" />
      </svg>
      <svg viewBox="0 0 6 18" className="h-[18px] w-[6px]" fill="none" stroke="#eee" strokeWidth="1.200" aria-hidden="true">
        <path d="M2 3v3M5 3v3M1 6h5M1 6v4l2 2v3h3M4 14v3" />
      </svg>
    </div>
  </footer>
);

export default function App() {
  return (
    <div className={`relative flex h-screen flex-col overflow-hidden bg-black ${UI}`}>
      <div className="relative min-h-0 flex-1 pl-[46px]">
        <MindManager />
        <div className="absolute bottom-0 left-0 h-[2px] w-[609px] bg-[#0a9fd8]" />
        <div className="absolute top-[55px] right-0 bottom-[20px] left-[108px]">
          <JMeter />
        </div>
      </div>
      <Dock />

      <Popup groups={NODE_MENU} place="left-[228px] top-[174px] w-[219px]" />
      <Popup groups={ADD_MENU} place="left-[442px] top-[172px] w-[91px]" />
      <Popup groups={SAMPLER_MENU} place="left-[532px] top-[170px] w-[145px]" />

      <p className="absolute top-[103px] left-[319px] text-[21px] leading-[30px] whitespace-nowrap text-[#ff1d12] font-['Noto_Sans','Noto_Sans_CJK_SC',sans-serif]">
        右键，添加，取样器，HTTP请求
      </p>
      <svg viewBox="0 0 84 62" className="pointer-events-none absolute top-[113px] left-[215px] h-[62px] w-[84px]" aria-hidden="true">
        <path d="M83 0 84 2 22 54l8 3L1 61 7 45l7 4z" fill="#ff1d12" />
      </svg>
    </div>
  );
}
